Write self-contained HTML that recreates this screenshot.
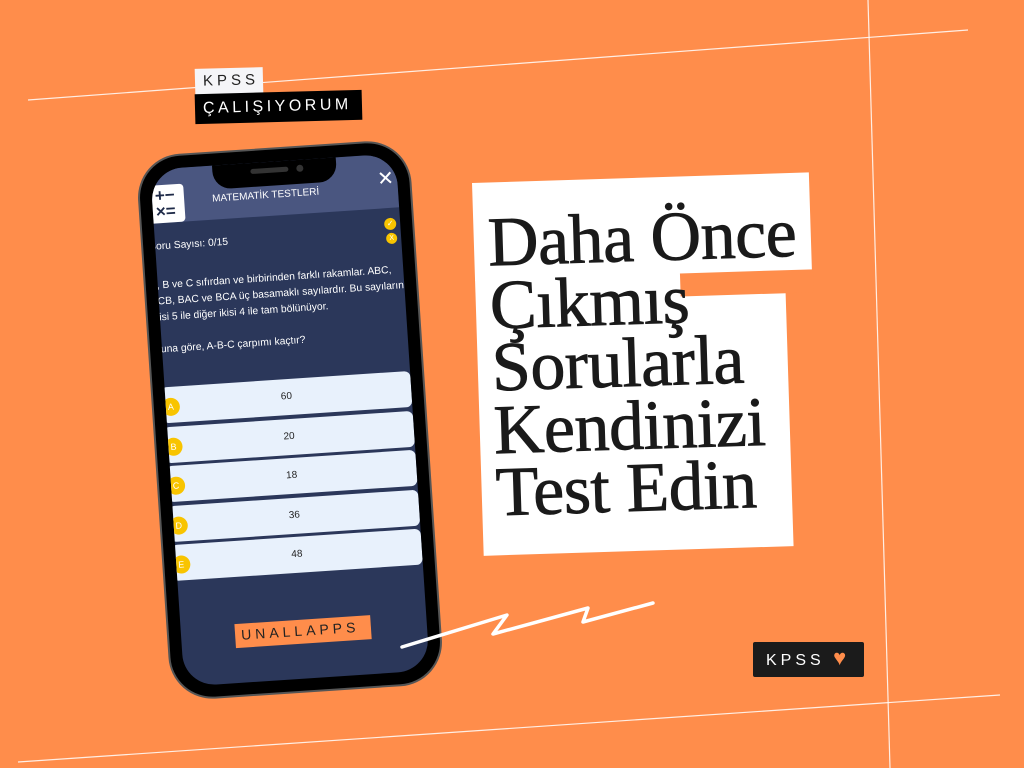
<!DOCTYPE html>
<html><head><meta charset="utf-8"><style>
*{margin:0;padding:0;box-sizing:border-box}
body{width:1024px;height:768px;overflow:hidden;background:#FF8D4B;position:relative;font-family:"Liberation Sans",sans-serif}
.abs{position:absolute}
.phone{left:153px;top:147px;width:274px;height:546px;border-radius:44px;background:#000;border:2px solid #555;transform:rotate(-3.8deg);transform-origin:center}
.screen{position:absolute;left:12px;top:12px;width:246px;height:518px;border-radius:32px;background:#2b375a;overflow:hidden}
.hdr{position:absolute;left:0;top:0;width:100%;height:54px;background:#4a5680}
.notch{position:absolute;left:62px;top:-2px;width:124px;height:26px;background:#000;border-radius:0 0 18px 18px}
.opt{position:absolute;left:-4px;width:250px;height:36px;background:#e8f1fc;border-radius:6px;font-size:10px;color:#222;text-align:center;line-height:36px}
.opt i{position:absolute;left:0px;top:11px;width:18px;height:18px;border-radius:50%;background:#f8c400;color:#fff;font-style:normal;font-size:9px;line-height:18px;text-align:center}
.q{color:#fff;font-size:10.3px;line-height:16px}
.white{background:#fff}
.ser{font-family:"Liberation Serif",serif;font-size:70px;color:#1a1a1a;line-height:62.5px;position:absolute;left:14px;top:30px;white-space:nowrap;-webkit-text-stroke:0.8px #1a1a1a;letter-spacing:-0.5px}
</style></head><body>
<svg class="abs" style="left:0;top:0" width="1024" height="768">
<line x1="28" y1="100" x2="968" y2="30" stroke="#fff" stroke-width="1.2" opacity=".85"/>
<line x1="18" y1="762" x2="1000" y2="695" stroke="#fff" stroke-width="1.2" opacity=".85"/>
<line x1="868" y1="0" x2="890" y2="768" stroke="#fff" stroke-width="1.2" opacity=".85"/>
</svg>
<div class="abs" style="left:195px;top:68px;width:68px;height:26px;background:#f5f5f8;color:#222;font-size:15px;letter-spacing:4px;padding:4px 0 0 8px;transform:rotate(-1.5deg)">KPSS</div>
<div class="abs" style="left:195px;top:92px;width:167px;height:30px;background:#000;color:#fff;font-size:16px;letter-spacing:3.5px;padding:6px 0 0 8px;transform:rotate(-1.5deg)">ÇALIŞIYORUM</div>

<div class="abs phone"><div class="screen">
<div class="hdr"></div>
<div class="notch"><div class="abs" style="left:38px;top:8px;width:38px;height:5px;border-radius:3px;background:#333"></div><div class="abs" style="left:84px;top:7px;width:7px;height:7px;border-radius:50%;background:#333"></div></div>
<div class="abs" style="left:-8px;top:16px;width:40px;height:38px;background:#fff;border-radius:4px;color:#1e2a48;font-weight:bold;font-size:17px;line-height:16px;padding:3px 0 0 11px">+−<br>×=</div>
<div class="abs" style="left:60px;top:28px;color:#fff;font-size:10px">MATEMATİK TESTLERİ</div>
<div class="abs" style="left:226px;top:14px;color:#fff;font-size:20px;line-height:22px;font-weight:300">✕</div>
<div class="abs" style="left:230px;top:64px;width:12px;height:12px;border-radius:50%;background:#f8c400;color:#fff;font-size:8px;text-align:center;line-height:12px">✓</div>
<div class="abs" style="left:231px;top:79px;width:11px;height:11px;border-radius:50%;background:#f8c400;color:#fff;font-size:7px;text-align:center;line-height:11px">X</div>
<div class="abs q" style="left:-6px;top:70px">Soru Sayısı: 0/15</div>
<div class="abs q" style="left:-8px;top:109px;width:266px">A, B ve C sıfırdan ve birbirinden farklı rakamlar. ABC, ACB, BAC ve BCA üç basamaklı sayılardır. Bu sayıların ikisi 5 ile diğer ikisi 4 ile tam bölünüyor.<br><br>Buna göre, A-B-C çarpımı kaçtır?</div>
<div class="opt" style="top:218px">60<i>A</i></div>
<div class="opt" style="top:257.5px">20<i>B</i></div>
<div class="opt" style="top:297px">18<i>C</i></div>
<div class="opt" style="top:336.5px">36<i>D</i></div>
<div class="opt" style="top:376px">48<i>E</i></div>
<div class="abs" style="left:54px;top:459px;width:136px;height:24px;background:#FF8D4B;color:#222;font-size:14px;letter-spacing:4px;padding:3px 0 0 6px">UNALLAPPS</div>
</div></div>

<div class="abs" style="left:472px;top:183px;width:340px;height:372px;transform:rotate(-1.8deg);transform-origin:0 0">
<div class="abs white" style="left:0;top:0;width:337px;height:98px"></div>
<div class="abs white" style="left:0;top:97px;width:310px;height:276px"></div>
<div class="abs" style="left:205px;top:97px;width:133px;height:23px;background:#FF8D4B"></div>
<div class="ser">Daha Önce<br>Çıkmış<br>Sorularla<br>Kendinizi<br>Test Edin</div>
</div>

<svg class="abs" style="left:0;top:0" width="1024" height="768">
<polyline points="402,647 507,615 493,634 588,608 583,622 653,603" fill="none" stroke="#fff" stroke-width="3.5" stroke-linejoin="round" stroke-linecap="round"/>
</svg>
<div class="abs" style="left:753px;top:642px;width:111px;height:35px;background:#1b1b1b;border-radius:2px;color:#fff;font-size:16px;letter-spacing:4px;padding:8px 0 0 13px">KPSS <span style="color:#FF8D4B;font-size:22px;letter-spacing:0;line-height:16px">♥</span></div>
</body></html>
